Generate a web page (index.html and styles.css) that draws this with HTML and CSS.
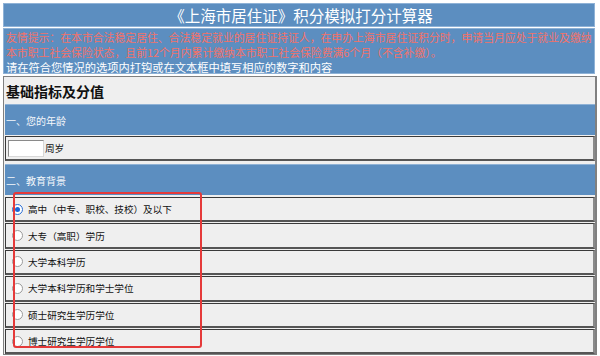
FILE: index.html
```html
<!DOCTYPE html>
<html lang="zh-CN">
<head>
<meta charset="utf-8">
<title>《上海市居住证》积分模拟打分计算器</title>
<link rel="stylesheet" href="styles.css">
</head>
<body>
<div class="page">
  <div class="title">《上海市居住证》积分模拟打分计算器</div>
  <div class="tips">
    <p class="warn">友情提示：在本市合法稳定居住、合法稳定就业的居住证持证人，在申办上海市居住证积分时，申请当月应处于就业及缴纳<br>本市职工社会保险状态，且前12个月内累计缴纳本市职工社会保险费满6个月（不含补缴）。</p>
    <p class="note">请在符合您情况的选项内打钩或在文本框中填写相应的数字和内容</p>
  </div>
  <div class="main">
    <div class="heading">基础指标及分值</div>
    <div class="section">一、您的年龄</div>
    <div class="row age-row"><span class="age-input"></span><span class="unit">周岁</span></div>
    <div class="section second">二、教育背景</div>
    <div class="options">
      <label class="row option"><span class="radio checked"></span><span>高中（中专、职校、技校）及以下</span></label>
      <label class="row option"><span class="radio"></span><span>大专（高职）学历</span></label>
      <label class="row option"><span class="radio"></span><span>大学本科学历</span></label>
      <label class="row option"><span class="radio"></span><span>大学本科学历和学士学位</span></label>
      <label class="row option"><span class="radio"></span><span>硕士研究生学历学位</span></label>
      <label class="row option"><span class="radio"></span><span>博士研究生学历学位</span></label>
      <div class="highlight"></div>
    </div>
  </div>
</div>
</body>
</html>
```
FILE: styles.css
```css
* { box-sizing: border-box; }
html, body { margin: 0; padding: 0; background: #ffffff; }
body {
  font-family: "Noto Sans CJK SC", "Noto Sans", sans-serif;
  width: 600px;
  height: 356px;
  overflow: hidden;
}
.page { padding: 3px 0 0 3px; }
.title {
  width: 592px;
  height: 24px;
  background: #5c8ec0;
  border: 1px solid #8fb2d6;
  color: #ffffff;
  font-size: 15.5px;
  line-height: 22px;
  text-align: center;
  padding-left: 4px;
}
.tips {
  width: 592px;
  margin-top: 1px;
  height: 46px;
  background: #5c8ec0;
  border: 1px solid #8fb2d6;
  padding: 1px 0 0 2px;
}
.tips p { margin: 0; white-space: nowrap; }
.warn {
  color: #f2726a;
  font-size: 10.85px;
  line-height: 15px;
}
.note {
  color: #ffffff;
  font-size: 11.25px;
  line-height: 14px;
}
.main {
  margin-top: 2px;
  width: 594px;
  background: #efefef;
  border: 1px solid #808080;
  border-right-width: 2px;
  padding: 0 0 0 1px;
}
.heading {
  height: 27px;
  font-size: 14px;
  font-weight: bold;
  line-height: 28px;
  padding-left: 1px;
  color: #111;
}
.section {
  height: 31px;
  background: #5c8ec0;
  border-top: 1px solid #8fb2d6;
  color: #f4f7fb;
  font-size: 10px;
  line-height: 32px;
  padding-left: 1px;
}
.section.second { margin-top: 3px; }
.row {
  display: flex;
  align-items: center;
  background: #efefef;
  border-style: solid;
  border-width: 1px 2px 2px 1px;
  border-color: #3a3a3a #8a8a8a #555555 #3a3a3a;
  font-size: 9.6px;
  color: #111;
}
.age-row {
  margin-top: 1px;
  height: 25px;
  padding-left: 2px;
}
.age-input {
  width: 36px;
  height: 17px;
  background: #ffffff;
  border: 1px solid;
  border-color: #8a8a8a #d8d8d8 #d8d8d8 #8a8a8a;
}
.unit { margin-left: 1px; font-size: 9.6px; }
.options {
  position: relative;
  padding-top: 1px;
}
.option {
  height: 25.4px;
  margin-top: 1px;
  padding-left: 6px;
}
.radio {
  width: 11px;
  height: 11px;
  border-radius: 50%;
  border: 1px solid #9a9a9a;
  background: #ffffff;
  margin-right: 5px;
  position: relative;
  flex: none;
}
.radio.checked { border-color: #2a6fd6; }
.radio.checked::after {
  content: "";
  position: absolute;
  left: 2px;
  top: 2px;
  width: 5px;
  height: 5px;
  border-radius: 50%;
  background: #1a66d9;
}
.highlight {
  position: absolute;
  left: 8px;
  top: -3px;
  width: 189px;
  height: 156px;
  border: 2px solid #e53a3a;
  border-radius: 3px;
  pointer-events: none;
}
```
